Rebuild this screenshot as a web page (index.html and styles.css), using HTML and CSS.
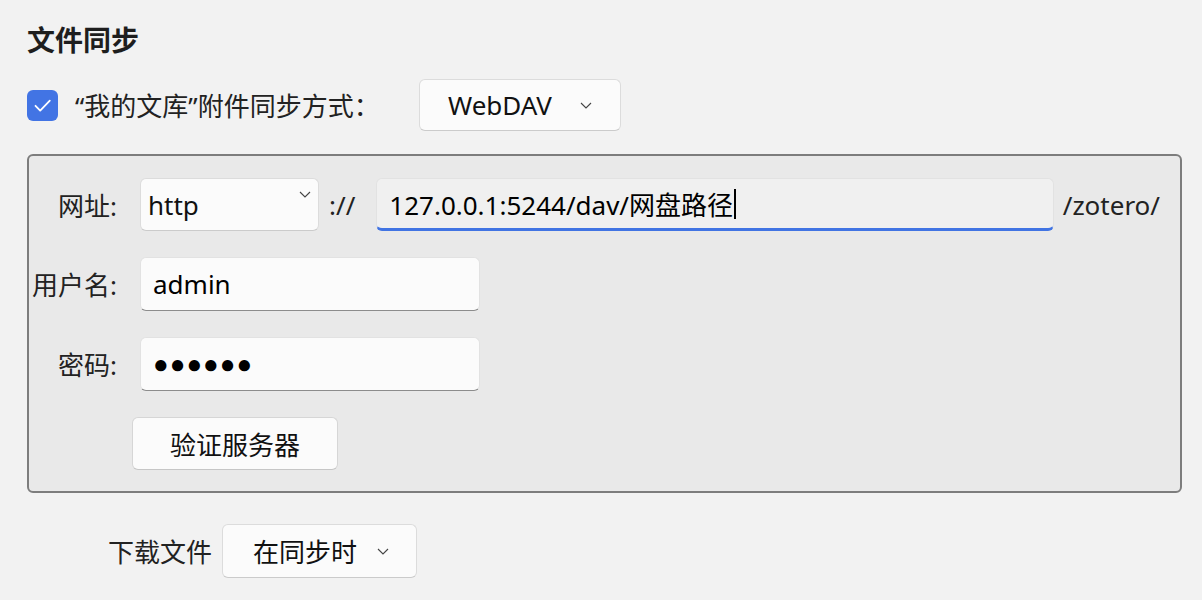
FILE: index.html
```html
<!DOCTYPE html>
<html lang="zh-CN">
<head>
  <meta charset="UTF-8" />
  <meta name="viewport" content="width=device-width, initial-scale=1.0" />
  <title>文件同步</title>
  <link rel="stylesheet" href="styles.css">
</head>
<body>
  <div class="pane">
    <h1 class="title">文件同步</h1>

    <div class="sync-row">
      <span class="checkbox">
        <svg width="31" height="31" viewBox="0 0 31 31">
          <path d="M8.5 15.8 L13.2 20.6 L22.8 10.6" fill="none" stroke="#fff" stroke-width="1.8" stroke-linecap="round" stroke-linejoin="round"/>
        </svg>
      </span>
      <span class="sync-label">“我的文库”附件同步方式：</span>
      <div class="dropdown dropdown-webdav">
        <span>WebDAV</span>
        <svg class="chevron" width="12" height="7" viewBox="0 0 12 7">
          <path d="M1 1 L6 6 L11 1" fill="none" stroke="#444" stroke-width="1.1"/>
        </svg>
      </div>
    </div>

    <div class="server-box">
      <label class="field-label">网址:</label>
      <div class="url-row">
        <div class="dropdown dropdown-scheme">
          <span>http</span>
          <svg class="chevron chevron-top" width="12" height="7" viewBox="0 0 12 7">
            <path d="M1 1 L6 6 L11 1" fill="none" stroke="#444" stroke-width="1.1"/>
          </svg>
        </div>
        <span class="url-sep">://</span>
        <div class="text-input focused">127.0.0.1:5244/dav/网盘路径<span class="caret"></span></div>
        <span class="url-suffix">/zotero/</span>
      </div>

      <label class="field-label">用户名:</label>
      <div class="text-input short">admin</div>

      <label class="field-label">密码:</label>
      <div class="text-input short password">●●●●●●</div>

      <span></span>
      <div><button class="btn-verify">验证服务器</button></div>
    </div>

    <div class="download-row">
      <span class="download-label">下载文件</span>
      <div class="dropdown dropdown-download">
        <span>在同步时</span>
        <svg class="chevron" width="12" height="7" viewBox="0 0 12 7">
          <path d="M1 1 L6 6 L11 1" fill="none" stroke="#444" stroke-width="1.1"/>
        </svg>
      </div>
    </div>
  </div>
</body>
</html>
```

FILE: styles.css
```css
body {
  margin: 0;
  background-color: #f2f2f2;
  font-family: "Noto Sans", "Noto Sans CJK SC", sans-serif;
  font-size: 26px;
  color: #222;
}

.pane {
  padding: 20px 20px 0 27px;
}

.title {
  margin: 0;
  font-size: 28px;
  font-weight: bold;
  line-height: 40px;
  color: #1e1e1e;
}

/* 同步方式 */
.sync-row {
  display: flex;
  align-items: center;
  height: 52px;
  margin-top: 19px;
}

.checkbox {
  width: 31px;
  height: 31px;
  border-radius: 6px;
  background-color: #4274e4;
  display: flex;
}

.sync-label {
  width: 344px;
  margin-left: 17px;
  white-space: nowrap;
}

.dropdown {
  display: flex;
  align-items: center;
  box-sizing: border-box;
  background: #fbfbfb;
  border: 1px solid #dcdcdc;
  border-bottom-color: #cbcbcb;
  border-radius: 6px;
  color: #111;
}

.dropdown-webdav {
  width: 202px;
  height: 52px;
  padding-left: 28px;
}

.chevron {
  margin-left: auto;
}

.dropdown-webdav .chevron {
  margin-right: 28px;
}

/* 服务器设置 */
.server-box {
  margin-top: 23px;
  box-sizing: border-box;
  border: 2px solid #7d7d7d;
  border-radius: 6px;
  background-color: #e9e9e9;
  padding: 22px 20px 21px 0;
  display: grid;
  grid-template-columns: 88px 1fr;
  grid-template-rows: 53px 54px 54px 53px;
  column-gap: 23px;
  row-gap: 26px;
  align-items: center;
}

.field-label {
  display: flex;
  justify-content: flex-end;
  white-space: nowrap;
}

.url-row {
  display: flex;
  align-items: stretch;
  height: 53px;
}

.dropdown-scheme {
  width: 179px;
  padding-left: 7px;
}

.chevron-top {
  align-self: flex-start;
  margin-top: 12px;
  margin-right: 7px;
}

.url-sep {
  display: flex;
  align-items: center;
  margin: 0 21px 0 10px;
}

.url-suffix {
  display: flex;
  align-items: center;
  margin-left: 9px;
}

.text-input {
  display: flex;
  align-items: center;
  box-sizing: border-box;
  height: 54px;
  padding-left: 12px;
  background: #fbfbfb;
  border: 1px solid #e2e2e2;
  border-bottom: 1px solid #8c8c8c;
  border-radius: 6px;
  color: #000;
  white-space: nowrap;
}

.text-input.focused {
  flex: 1;
  height: 53px;
  background: #f0f0f0;
  border-bottom: 3px solid #4174e3;
}

.caret {
  display: inline-block;
  width: 2px;
  height: 30px;
  background: #000;
  margin-left: 1px;
}

.text-input.short {
  width: 340px;
}

.password {
  font-family: "Liberation Sans", "DejaVu Sans", sans-serif;
  font-size: 26px;
  letter-spacing: 1px;
}

.btn-verify {
  margin-left: -8px;
  width: 206px;
  height: 53px;
  font-family: inherit;
  font-size: 26px;
  color: #111;
  background: #fbfbfb;
  border: 1px solid #d6d6d6;
  border-bottom-color: #c6c6c6;
  border-radius: 6px;
  padding: 0;
}

/* 下载文件 */
.download-row {
  display: flex;
  align-items: center;
  height: 54px;
  margin-top: 31px;
  padding-left: 81px;
}

.download-label {
  margin-right: 10px;
}

.dropdown-download {
  width: 195px;
  height: 54px;
  padding-left: 30px;
}

.dropdown-download .chevron {
  margin-right: 27px;
}
```
